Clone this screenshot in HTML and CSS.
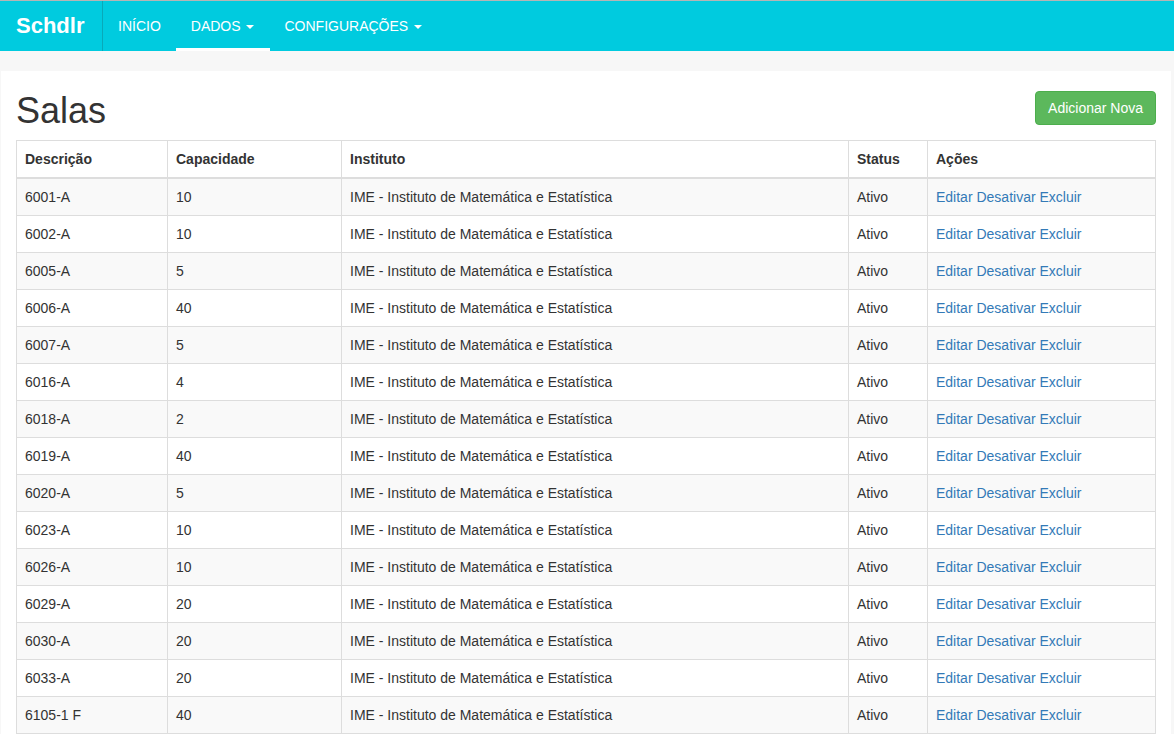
FILE: index.html
```html
<!DOCTYPE html>
<html lang="pt">
<head>
<meta charset="utf-8">
<title>Salas - Schdlr</title>
<link rel="stylesheet" href="styles.css">
</head>
<body>
<nav class="navbar">
  <a class="brand" href="#">Schdlr</a>
  <ul class="nav">
    <li><a href="#">INÍCIO</a></li>
    <li class="active"><a href="#">DADOS <span class="caret"></span></a></li>
    <li><a href="#">CONFIGURAÇÕES <span class="caret"></span></a></li>
  </ul>
</nav>
<div class="wrap">
  <main class="panel">
    <div class="page-head">
      <h1>Salas</h1>
      <a class="btn" href="#">Adicionar Nova</a>
    </div>
    <table class="table">
      <thead>
        <tr>
          <th class="c1">Descrição</th>
          <th class="c2">Capacidade</th>
          <th class="c3">Instituto</th>
          <th class="c4">Status</th>
          <th class="c5">Ações</th>
        </tr>
      </thead>
      <tbody>
        <tr><td>6001-A</td><td>10</td><td>IME - Instituto de Matemática e Estatística</td><td>Ativo</td><td><a href="#">Editar</a> <a href="#">Desativar</a> <a href="#">Excluir</a></td></tr>
        <tr><td>6002-A</td><td>10</td><td>IME - Instituto de Matemática e Estatística</td><td>Ativo</td><td><a href="#">Editar</a> <a href="#">Desativar</a> <a href="#">Excluir</a></td></tr>
        <tr><td>6005-A</td><td>5</td><td>IME - Instituto de Matemática e Estatística</td><td>Ativo</td><td><a href="#">Editar</a> <a href="#">Desativar</a> <a href="#">Excluir</a></td></tr>
        <tr><td>6006-A</td><td>40</td><td>IME - Instituto de Matemática e Estatística</td><td>Ativo</td><td><a href="#">Editar</a> <a href="#">Desativar</a> <a href="#">Excluir</a></td></tr>
        <tr><td>6007-A</td><td>5</td><td>IME - Instituto de Matemática e Estatística</td><td>Ativo</td><td><a href="#">Editar</a> <a href="#">Desativar</a> <a href="#">Excluir</a></td></tr>
        <tr><td>6016-A</td><td>4</td><td>IME - Instituto de Matemática e Estatística</td><td>Ativo</td><td><a href="#">Editar</a> <a href="#">Desativar</a> <a href="#">Excluir</a></td></tr>
        <tr><td>6018-A</td><td>2</td><td>IME - Instituto de Matemática e Estatística</td><td>Ativo</td><td><a href="#">Editar</a> <a href="#">Desativar</a> <a href="#">Excluir</a></td></tr>
        <tr><td>6019-A</td><td>40</td><td>IME - Instituto de Matemática e Estatística</td><td>Ativo</td><td><a href="#">Editar</a> <a href="#">Desativar</a> <a href="#">Excluir</a></td></tr>
        <tr><td>6020-A</td><td>5</td><td>IME - Instituto de Matemática e Estatística</td><td>Ativo</td><td><a href="#">Editar</a> <a href="#">Desativar</a> <a href="#">Excluir</a></td></tr>
        <tr><td>6023-A</td><td>10</td><td>IME - Instituto de Matemática e Estatística</td><td>Ativo</td><td><a href="#">Editar</a> <a href="#">Desativar</a> <a href="#">Excluir</a></td></tr>
        <tr><td>6026-A</td><td>10</td><td>IME - Instituto de Matemática e Estatística</td><td>Ativo</td><td><a href="#">Editar</a> <a href="#">Desativar</a> <a href="#">Excluir</a></td></tr>
        <tr><td>6029-A</td><td>20</td><td>IME - Instituto de Matemática e Estatística</td><td>Ativo</td><td><a href="#">Editar</a> <a href="#">Desativar</a> <a href="#">Excluir</a></td></tr>
        <tr><td>6030-A</td><td>20</td><td>IME - Instituto de Matemática e Estatística</td><td>Ativo</td><td><a href="#">Editar</a> <a href="#">Desativar</a> <a href="#">Excluir</a></td></tr>
        <tr><td>6033-A</td><td>20</td><td>IME - Instituto de Matemática e Estatística</td><td>Ativo</td><td><a href="#">Editar</a> <a href="#">Desativar</a> <a href="#">Excluir</a></td></tr>
        <tr><td>6105-1 F</td><td>40</td><td>IME - Instituto de Matemática e Estatística</td><td>Ativo</td><td><a href="#">Editar</a> <a href="#">Desativar</a> <a href="#">Excluir</a></td></tr>
      </tbody>
    </table>
  </main>
</div>
</body>
</html>
```
FILE: styles.css
```css
html {
  background: #fff;
}
body {
  margin: 0;
  font-family: "Liberation Sans", Arial, Helvetica, sans-serif;
  font-size: 14px;
  line-height: 20px;
  color: #333;
}
a {
  text-decoration: none;
  color: #337ab7;
}
.navbar {
  display: flex;
  align-items: stretch;
  height: 50px;
  background: #00cbdf;
  border-top: 1px solid #b5b5b5;
}
.brand {
  display: block;
  padding: 14px 15px 0 16px;
  width: 71px;
  font-size: 22px;
  font-weight: bold;
  line-height: 22px;
  color: #fff;
  border-right: 1px solid #08a9b9;
}
.nav {
  display: flex;
  margin: 0;
  padding: 0;
  list-style: none;
}
.nav li a {
  display: block;
  padding: 15px 15px 12px;
  line-height: 20px;
  color: #fff;
  border-bottom: 3px solid transparent;
}
.nav li.active a {
  border-bottom-color: #fff;
  padding-right: 16px;
}
.nav li.active + li a {
  padding-left: 14px;
}
.caret {
  display: inline-block;
  width: 0;
  height: 0;
  margin-left: 2px;
  vertical-align: middle;
  border-top: 4px solid #fff;
  border-left: 4px solid transparent;
  border-right: 4px solid transparent;
}
.wrap {
  background: #f7f7f7;
  padding: 20px 3px 0 1px;
}
.panel {
  display: block;
  background: #fff;
  padding: 0 15px;
}
.page-head {
  display: flex;
  justify-content: space-between;
  align-items: flex-start;
  padding-top: 20px;
  margin-bottom: 9px;
}
h1 {
  margin: 0;
  font-size: 36px;
  font-weight: 500;
  line-height: 40px;
  color: #333;
}
.btn {
  display: block;
  padding: 6px 12px;
  font-size: 14px;
  line-height: 20px;
  color: #fff;
  background: #5cb85c;
  border: 1px solid #4cae4c;
  border-radius: 4px;
}
.table {
  width: 100%;
  border-collapse: collapse;
  border-spacing: 0;
  border: 1px solid #ddd;
}
.table th,
.table td {
  padding: 8px;
  text-align: left;
  vertical-align: top;
  border: 1px solid #ddd;
  line-height: 20px;
}
.table th {
  font-weight: bold;
  border-bottom: 2px solid #ddd;
}
.table tbody tr:nth-child(odd) {
  background: #f9f9f9;
}
.c1 { width: 134px; }
.c2 { width: 157px; }
.c3 { width: 490px; }
.c4 { width: 62px; }
```
